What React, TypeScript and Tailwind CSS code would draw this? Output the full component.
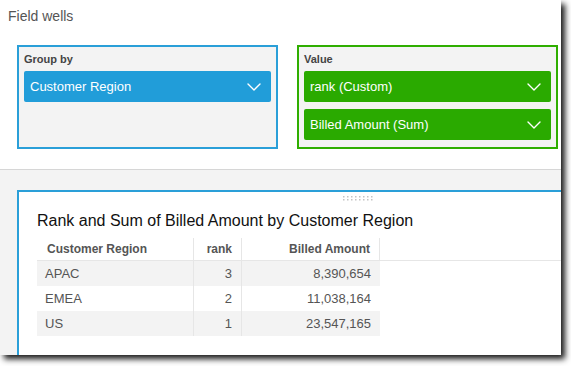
import React from "react";

const Chevron = () => (
  <svg width="14" height="8" viewBox="0 0 14 8" fill="none" className="shrink-0">
    <path d="M1 1 L7 7 L13 1" stroke="white" strokeWidth="1.4" strokeLinecap="round" strokeLinejoin="round" />
  </svg>
);

const Pill = ({ label, color }: { label: string; color: string }) => (
  <div className={`h-[31px] mx-[5px] rounded-[2px] flex items-center justify-between pl-[6px] pr-[10px] text-white text-[13px] ${color}`}>
    <span>{label}</span>
    <Chevron />
  </div>
);

const rows = [
  { region: "APAC", rank: "3", amount: "8,390,654", bg: "bg-[#f3f3f3]" },
  { region: "EMEA", rank: "2", amount: "11,038,164", bg: "bg-white" },
  { region: "US", rank: "1", amount: "23,547,165", bg: "bg-[#f3f3f3]" },
];

export default function App() {
  return (
    <div className="w-[571px] h-[366px] bg-white overflow-hidden" style={{ fontFamily: '"Liberation Sans", Arial, sans-serif' }}>
      <div className="w-[561px] h-[355px] flex flex-col overflow-hidden shadow-[4px_4px_6px_rgba(0,0,0,0.9)] relative">
        {/* Top: field wells */}
        <div className="h-[170px] shrink-0 bg-white border-b border-[#d6d6d6]">
          <div className="pt-[7px] pl-[8px] text-[14px] leading-[18px] text-[#555]">Field wells</div>
          <div className="flex gap-[19px] pl-[17px] mt-[20px]">
            <div className="w-[261px] h-[104px] border-2 border-[#2a9fd8] bg-[#f3f3f3]">
              <div className="pt-[5px] pl-[5px] text-[11px] leading-[14px] font-bold text-[#444] mb-[5px]">Group by</div>
              <Pill label="Customer Region" color="bg-[#219dd9]" />
            </div>
            <div className="w-[261px] h-[104px] border-2 border-[#2fae00] bg-[#f3f3f3]">
              <div className="pt-[5px] pl-[5px] text-[11px] leading-[14px] font-bold text-[#444] mb-[5px]">Value</div>
              <div className="flex flex-col gap-[7px]">
                <Pill label="rank (Custom)" color="bg-[#2aaa00]" />
                <Pill label="Billed Amount (Sum)" color="bg-[#2aaa00]" />
              </div>
            </div>
          </div>
        </div>
        {/* Bottom: visual */}
        <div className="flex-1 bg-[#f3f3f3] pt-[20px] pl-[17px] flex flex-col">
          <div className="flex-1 bg-white border-t-2 border-l-2 border-[#2a9fd8] -mr-[20px] -mb-[20px]">
            <div className="pl-[324px] pt-[4px] h-[10px]">
              <svg width="30" height="5" viewBox="0 0 30 5">
                {Array.from({ length: 8 }).map((_, i) => (
                  <g key={i}>
                    <rect x={i * 4} y={0} width={1.5} height={1.5} fill="#c4c4c4" />
                    <rect x={i * 4} y={3} width={1.5} height={1.5} fill="#c4c4c4" />
                  </g>
                ))}
              </svg>
            </div>
            <div className="pl-[18px] pt-[9px] text-[16px] leading-[20px] text-[#111]">
              Rank and Sum of Billed Amount by Customer Region
            </div>
            <div className="mt-[7px] pl-[18px]">
              <div className="flex h-[23px] border-b border-[#e6e6e6] text-[12px] font-bold text-[#555] items-stretch">
                <div className="w-[157px] pl-[10px] flex items-center border-r border-[#e6e6e6]">Customer Region</div>
                <div className="w-[48px] pr-[9px] flex items-center justify-end border-r border-[#e6e6e6]">rank</div>
                <div className="w-[138px] pr-[9px] flex items-center justify-end border-r border-[#e6e6e6]">Billed Amount</div>
              </div>
              {rows.map((r) => (
                <div key={r.region} className={`flex h-[25px] w-[343px] text-[13px] text-[#555] ${r.bg}`}>
                  <div className="w-[157px] pl-[8px] flex items-center border-r border-[#e6e6e6]">{r.region}</div>
                  <div className="w-[48px] pr-[9px] flex items-center justify-end border-r border-[#e6e6e6]">{r.rank}</div>
                  <div className="w-[138px] pr-[9px] flex items-center justify-end">{r.amount}</div>
                </div>
              ))}
            </div>
          </div>
        </div>
      </div>
    </div>
  );
}
